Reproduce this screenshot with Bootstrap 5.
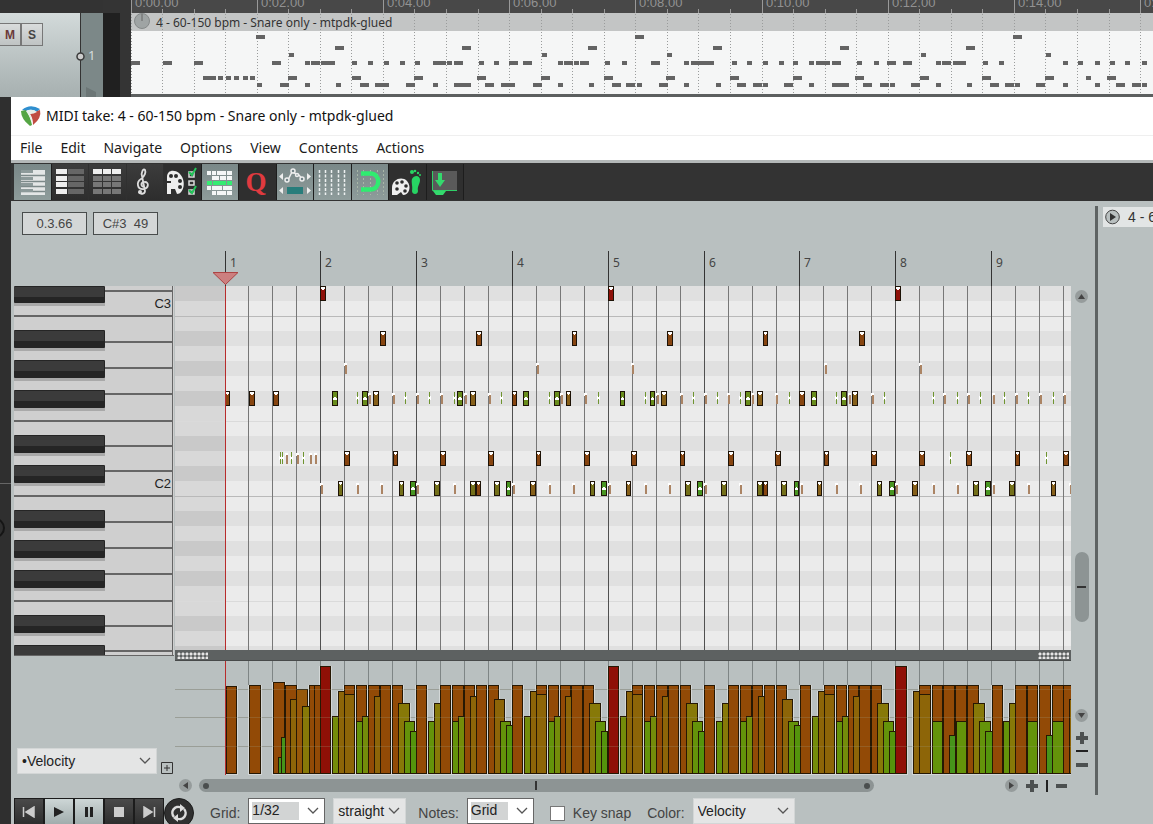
<!DOCTYPE html>
<html lang="en">
<head>
<meta charset="utf-8">
<meta name="viewport" content="width=device-width, initial-scale=1">
<title>MIDI take: 4 - 60-150 bpm - Snare only - mtpdk-glued</title>
<link href="https://cdn.jsdelivr.net/npm/bootstrap@5.3.0/dist/css/bootstrap.min.css" rel="stylesheet">
<style>
body{background:#333;font-family:"Noto Sans","Open Sans",sans-serif;font-size:14px;line-height:20px;color:#111;overflow:hidden}
svg{display:block}
.arrange{height:97px}
.trackhead{width:81px;margin-top:13px;background:linear-gradient(#d3dada,#b3bcbc 70%,#a7b0b0);border-right:1px solid #333}
.ms-btn{width:22px;height:23px;margin-top:10px;background:linear-gradient(#d9dcdc,#bfc3c3);border:1px solid #777;font:bold 12px/20px "Liberation Sans",sans-serif;color:#444;padding:0}
.ms-btn.mute{color:#6b3a3a;border-left:0;width:21px}
.tracknum{width:22px;margin-top:13px;background:#7c8888;color:#d7dcdc}
.tracknum span{font-size:13px;margin-left:7px}
.trackgap{width:28px;background:#343434}
.trackgap div{width:17px;margin-top:13px;background:#202020}
.side{width:11px;background:#2f2f2f}
.titlebar{height:39px;background:#fff;border-bottom:1px solid #efefef;font-size:14px;padding-left:9px}
.menubar{height:27px;background:#fff;border-bottom:3px solid #b4b8b8;padding-left:9px}
.menubar a{color:#1b1b1b;text-decoration:none;margin-right:18px;font-size:14px;line-height:24px}
.tools{background:#333;height:38px;padding:1px 0 1px 3px}
.toolset{width:450px}
.toolset button{padding:0;border:0;border-right:1px solid #1d1d1d;background:#2f2f2f;height:36px}
.toolset button.grp{background:linear-gradient(#3c3c3c,#2d2d2d);border-right-color:#303030}
.toolset button.on{background:linear-gradient(#7a8888,#8e9c9b)}
.editor{background:#b9c0c0}
.leftcol{width:164px;padding-left:3px}
.infobar{height:85px;padding:11px 0 0 8px;gap:6px}
.info{height:23px;width:65px;border:1px solid #484c4c;background:#d4d7d7;color:#444;font:13px/21px "Liberation Sans",sans-serif;text-align:center;white-space:pre}
.lanecell{height:120px;padding:0 2px 2px 3px}
.form-select{border-radius:0;border:1px solid #d3d6d6;background-color:#e4e5e5;color:#222;font:14px/20px "Liberation Sans",sans-serif;height:26px;padding:0 18px 0 4px;--bs-form-select-bg-img:url("data:image/svg+xml,%3csvg xmlns='http://www.w3.org/2000/svg' viewBox='0 0 12 12'%3e%3cpath fill='none' stroke='%23555' stroke-width='1.3' d='m1 3 5 5 5-5'/%3e%3c/svg%3e");background-position:right 5px center;background-size:12px}
.form-select.edit{background-color:#fff;border-color:#666;background-image:var(--bs-form-select-bg-img),linear-gradient(#d2d4d4,#d2d4d4);background-repeat:no-repeat;background-position:right 5px center,3px 3px;background-size:12px,calc(100% - 28px) 18px;line-height:18px;padding-bottom:3px;padding-left:3px}
.splitter{height:11px;background:#5d6161;border-bottom:1px solid #474a4a;padding:2px 2px 0}
.grip{width:31px;height:7px;background:radial-gradient(circle,#e6e6e6 1px,transparent 2px) 0 0/4px 4px}
.hbar{height:21px;padding:0 0 0 4px}
.round{width:13px;height:13px;border-radius:50%;background:#969c9c;border:0;padding:0;display:flex;align-items:center;justify-content:center}
.hthumb{width:83%;height:13px;border-radius:7px;background:#8d9494;margin-left:7px;padding:0 4px}
.dotgrip{width:6px;height:6px;border-radius:50%;background:#4a4e4e}
.vcol{width:24px;padding:5px 7px 4px 4px}
.vthumb{width:14px;height:70px;border-radius:7px;background:#8d9494}
.zoombtn{border:0;padding:0;background:none}
.vdiv{width:3px;margin:5px 0 1px;background:#5e6363}
.takes{width:55px;padding:6px 0 0 5px}
.takes div{height:20px;padding-left:2px;background:#e2e5e5;font:14px/20px "Liberation Sans",sans-serif;white-space:nowrap;color:#333}
.transport{height:31px;padding:2px 0 0 3px;background:#b9c0c0;font:14px/20px "Liberation Sans",sans-serif;color:#444}
.transport label{padding-top:5px}
.transport button{width:30px;height:28px;border:1px solid #1c1c1c;padding:0;background:linear-gradient(#4a4a4a,#2c2c2c);display:flex;align-items:center;justify-content:center}
.transport button.on{background:linear-gradient(#cdd6d6,#9fabab)}
.transport button.loop{width:30px;height:30px;border-radius:50%;background:#303030}
.transport .form-check-input{border-radius:0;width:15px;height:15px;border:1px solid #777;background:#fff}
.w-grid{width:77px}.w-type{width:73px}.w-notes{width:67px}.w-color{width:102px}
</style>
</head>
<body>
<div class="vh-100 d-flex flex-column overflow-hidden">

<section class="arrange d-flex flex-shrink-0">
  <div class="trackhead d-flex flex-shrink-0">
    <button class="ms-btn mute">M</button><button class="ms-btn">S</button>
  </div>
  <div class="tracknum position-relative d-flex align-items-center flex-shrink-0"><span>1</span>
    <svg class="position-absolute top-0 start-0" width="22" height="84" overflow="visible"><circle cx="-.5" cy="43.500" r="3.500" fill="#ccc" stroke="#3a3a3a" stroke-width="1.500"/><path d="M5 74l10 5v5H5z" fill="#6c7676"/></svg>
  </div>
  <div class="trackgap d-flex flex-shrink-0"><div></div></div>
  <svg id="arrange" class="flex-fill" width="100" height="97"></svg>
</section>

<div class="d-flex flex-fill">
  <div class="side flex-shrink-0"><svg width="11" height="450"><path d="M0 386.500h11" stroke="#666"/><circle cx="-5" cy="431" r="9" fill="none" stroke="#151515" stroke-width="2"/></svg></div>
  <main class="flex-fill overflow-hidden">
    <div class="titlebar d-flex align-items-center gap-1">
      <svg width="22" height="22" viewBox="0 0 22 22"><path d="M2 5Q10-2 20 4L17 7Q11 3 6 6z" fill="#2f8fcf"/><path d="M1 6L6 5Q10 11 12 20L10 21Q1 14 1 6z" fill="#55a544"/><path d="M20 5Q22 13 13 20Q13 13 10 9z" fill="#c04c42"/><path d="M6 6Q13 3 17 7Q14 9 10 9Q12 13 12 17Q9 10 6 6z" fill="#e8eee8"/></svg>
      <span>MIDI take: 4 - 60-150 bpm - Snare only - mtpdk-glued</span>
    </div>
    <nav class="menubar d-flex">
      <a href="#">File</a><a href="#">Edit</a><a href="#">Navigate</a><a href="#">Options</a><a href="#">View</a><a href="#">Contents</a><a href="#">Actions</a>
    </nav>
    <div class="tools">
      <div class="toolset d-flex">
        <button class="flex-fill on" aria-label="Piano roll"><svg width="36" height="36"><rect x="7" y="6" width="24" height="25" fill="#e3e6e6"/><path d="M7 11.500h24M7 17.500h24M7 22.500h24M7 27.500h24" stroke="#7c8989" stroke-width="1.500"/><path d="M7 6h12v3H7zM7 13h12v3H7zM7 19h12v3H7zM7 25h12v3H7z" fill="#8d9a9a"/></svg></button>
        <button class="flex-fill grp" aria-label="Named notes"><svg width="36" height="36"><path d="M4 5h11v5H4zM4 12h11v5H4zM4 18h11v5H4zM4 25h11v5H4z" fill="#eee"/><path d="M16 5h16v5H16zM16 12h16v5H16zM16 18h16v5H16zM16 25h16v5H16z" fill="#666"/></svg></button>
        <button class="flex-fill grp" aria-label="Event list"><svg width="36" height="36"><path d="M4 5h9v5H4zM14 5h8v5h-8zM23 5h9v5h-9z" fill="#eee"/><path d="M4 12h9v5H4zM14 12h8v5h-8zM23 12h9v5h-9zM4 18h9v5H4zM14 18h8v5h-8zM23 18h9v5h-9zM4 25h9v5H4zM14 25h8v5h-8zM23 25h9v5h-9z" fill="#777"/></svg></button>
        <button class="flex-fill grp" aria-label="Notation"><svg width="36" height="36"><g fill="none" stroke="#ddd" stroke-width="1.800"><path d="M17 23c-4-1-3-6 1-5 4 0 4 6-1 7-7 1-8-7-3-10 4-3 5-7 4-9-2-2-4 3-3 6l3 15c0 3-5 4-6 1"/></g><circle cx="13" cy="28" r="2" fill="#ddd"/></svg></button>
        <button class="flex-fill" aria-label="Color by"><svg width="36" height="36"><path d="M3 30V13C3 6 10 5 15 9c8 7 5 21-2 21l-2-5h-4v5z" fill="#eee"/><g fill="#2c2c2c"><circle cx="7" cy="12" r="2"/><circle cx="12" cy="12" r="2"/><circle cx="16" cy="17" r="2"/><circle cx="16" cy="23" r="2"/><path d="M3 17h4v2H3z"/></g><g fill="none" stroke="#ddd" stroke-width="1.500"><path d="M25 8h5v5h-5zM25 17h5v4h-5zM25 26h5v4h-5z"/></g><path d="M25 8l3 3 4-7M25 26l3 3 4-7" fill="none" stroke="#24c55b" stroke-width="2"/></svg></button>
        <button class="flex-fill on" aria-label="Show rows"><svg width="36" height="36"><path d="M5 7h4v4H5zM10 7h4v4h-4zM15 7h9v4h-9zM25 7h5v4h-5zM10 12h7v4h-7zM18 12h6v4h-6zM25 12h5v4h-5zM5 22h4v4H5zM10 22h10v4H10zM21 22h9v4h-9zM10 27h4v4h-4zM15 27h9v4h-9zM25 27h5v4h-5z" fill="#f4f6f6"/><path d="M5 17h5v4H5zM11 17h13v4H11zM25 17h5v4h-5z" fill="#35ec72"/></svg></button>
        <button class="flex-fill" aria-label="Quantize"><svg width="36" height="36"><text x="17" y="27" text-anchor="middle" font-family="Liberation Serif,serif" font-weight="bold" font-size="27" fill="#e03a3f">Q</text></svg></button>
        <button class="flex-fill on" aria-label="Move CC with notes"><svg width="36" height="36"><path d="M11 16l4-8 7 3 4 5" fill="none" stroke="#eee" stroke-width="1.500"/><g fill="#75868a" stroke="#eee" stroke-width="1.500"><circle cx="10" cy="16" r="2"/><circle cx="16" cy="7" r="2"/><circle cx="20" cy="11" r="1.500"/><circle cx="25" cy="15" r="2"/></g><path d="M6 9v7l-4-3.500zM30 9v7l4-3.500zM6 23v7l-4-3.500zM30 23v7l4-3.500z" fill="#eee"/><path d="M10 23h16v7H10z" fill="#287d7b"/></svg></button>
        <button class="flex-fill on" aria-label="Grid lines"><svg width="36" height="36"><path d="M5.500 6v25M11.500 6v25M17.500 6v25M24.500 6v25M30.500 6v25" stroke="#eef1f1" stroke-dasharray="3 1.500" stroke-width="1.500"/></svg></button>
        <button class="flex-fill on" aria-label="Snap to grid"><svg width="36" height="36"><path d="M5.500 6v25M11.500 6v25M18.500 6v25M25.500 6v25M31.500 6v25" stroke="#a8b7a8" stroke-dasharray="2 2"/><path d="M9 9.500h9c11 0 11 16 0 16H9" fill="none" stroke="#2fec70" stroke-width="4.500"/></svg></button>
        <button class="flex-fill" aria-label="Step input colors"><svg width="36" height="36"><path d="M3 31V24c0-9 10-12 15-7 5 6 2 14-4 14l-2-3-4 3z" fill="#eee"/><g fill="#2c2c2c"><circle cx="8" cy="19" r="1.800"/><circle cx="13" cy="18" r="1.800"/><circle cx="17" cy="22" r="1.800"/><circle cx="8" cy="25" r="1.800"/><circle cx="16" cy="27" r="1.800"/></g><path d="M23 15c2-4 8-4 8 1 0 4-3 6-2 11 0 4-6 4-6 0 1-4-1-9 0-12z" fill="#27d463"/><g fill="#27d463"><circle cx="23" cy="8" r="2"/><circle cx="26" cy="7" r="1.300"/><circle cx="29" cy="9" r="1.200"/><circle cx="31" cy="11" r="1"/></g></svg></button>
        <button class="flex-fill" aria-label="Dock"><svg width="36" height="36"><path d="M6 7h24v19H6z" fill="#5a5a5a"/><path d="M5.500 7v19.500H30" fill="none" stroke="#2fd067"/><path d="M11 9h4v7h3l-5 7-5-7h3z" fill="#34d96d"/><path d="M6 27h13l-3 4h-7z" fill="#34d96d"/></svg></button>
      </div>
    </div>

    <div class="editor d-flex">
      <div class="leftcol flex-shrink-0">
        <div class="infobar d-flex"><div class="info">0.3.66</div><div class="info">C#3  49</div></div>
        <svg id="keys" width="161" height="370"></svg>
        <div class="lanecell d-flex align-items-end gap-1">
          <select class="form-select" aria-label="Lane"><option>•Velocity</option></select>
          <button class="zoombtn" aria-label="Add lane"><svg width="12" height="12"><path d="M.5.500h11v11H.5zM3 6h6M6 3v6" fill="none" stroke="#333"/></svg></button>
        </div>
      </div>
      <div class="flex-fill overflow-hidden">
        <svg id="ruler" width="100%" height="85"></svg>
        <svg id="roll" width="100%" height="364"></svg>
        <div class="splitter d-flex justify-content-between"><div class="grip"></div><div class="grip"></div></div>
        <svg id="lane" width="100%" height="114"></svg>
        <div class="hbar d-flex align-items-center">
          <button class="round" aria-label="Scroll left"><svg width="7" height="7"><path d="M6 0v7L1 3.500z" fill="#444"/></svg></button>
          <div class="flex-fill"><div class="hthumb d-flex justify-content-between align-items-center"><i class="dotgrip"></i><svg width="2" height="9"><path d="M1 0v9" stroke="#333" stroke-width="2"/></svg><i class="dotgrip"></i></div></div>
          <button class="round" aria-label="Scroll right"><svg width="7" height="7"><path d="M1 0v7l5-3.500z" fill="#444"/></svg></button>
          <button class="zoombtn ms-2" aria-label="Zoom in"><svg width="12" height="12"><path d="M0 6h12M6 0v12" stroke="#4c5050" stroke-width="4"/></svg></button>
          <svg class="ms-2" width="2" height="12"><path d="M1 0v12" stroke="#222" stroke-width="2"/></svg>
          <button class="zoombtn ms-2 me-1" aria-label="Zoom out"><svg width="11" height="12"><path d="M0 6h11" stroke="#4c5050" stroke-width="4"/></svg></button>
        </div>
      </div>
      <div class="vcol d-flex flex-column align-items-center flex-shrink-0">
        <svg height="84" width="1"></svg>
        <button class="round flex-shrink-0" aria-label="Scroll up"><svg width="7" height="7"><path d="M0 6h7L3.500 1z" fill="#444"/></svg></button>
        <div class="flex-fill d-flex flex-column"><div style="flex:250"></div><div class="vthumb d-flex align-items-center justify-content-center"><svg width="9" height="2"><path d="M0 1h9" stroke="#333" stroke-width="2"/></svg></div><div style="flex:87"></div></div>
        <button class="round flex-shrink-0" aria-label="Scroll down"><svg width="7" height="7"><path d="M0 1h7L3.500 6z" fill="#444"/></svg></button>
        <button class="zoombtn mt-2" aria-label="Zoom in vertically"><svg width="12" height="14"><path d="M0 8h12M6 2v12" stroke="#4c5050" stroke-width="4"/></svg></button>
        <svg class="mt-1" width="12" height="6"><path d="M0 3h12" stroke="#222" stroke-width="2"/></svg>
        <button class="zoombtn mt-2 mb-4" aria-label="Zoom out vertically"><svg width="12" height="6"><path d="M0 3h12" stroke="#4c5050" stroke-width="4"/></svg></button>
      </div>
      <div class="vdiv flex-shrink-0"></div>
      <aside class="takes flex-shrink-0 overflow-hidden"><div class="d-flex align-items-center gap-2"><svg class="flex-shrink-0" width="15" height="16"><circle cx="7.500" cy="8" r="6.800" fill="#b9c0c0" stroke="#444"/><path d="M5 4v8l6-4z" fill="#333"/></svg><span>4 - 60-150 bpm</span></div></aside>
    </div>

    <div class="transport d-flex align-items-start">
      <button aria-label="Start"><svg width="14" height="12"><path d="M1.500 1v10M12 1v10L4 6z" stroke="#ccc" stroke-width="1.500" fill="#ccc"/></svg></button>
      <button class="on" aria-label="Play"><svg width="12" height="12"><path d="M1 1v10l10-5z" fill="#222"/></svg></button>
      <button class="on" aria-label="Pause"><svg width="10" height="12"><path d="M1 1h3v10H1zM6 1h3v10H6z" fill="#222"/></svg></button>
      <button aria-label="Stop"><svg width="10" height="10"><path d="M0 0h10v10H0z" fill="#ccc"/></svg></button>
      <button aria-label="End"><svg width="14" height="12"><path d="M12.500 1v10M2 1v10l8-5z" stroke="#ccc" stroke-width="1.500" fill="#ccc"/></svg></button>
      <button class="loop" aria-label="Repeat"><svg width="18" height="18"><path d="M4 13A6 6 0 0 1 11 3.500M14 5a6 6 0 0 1-7 9.500" fill="none" stroke="#ddd" stroke-width="2.500"/><path d="M10 0l5 4-5 4zM8 18l-5-4 5-4z" fill="#ddd"/></svg></button>
      <label for="g" class="ms-3">Grid:</label><select id="g" class="form-select edit w-grid ms-2"><option>1/32</option></select>
      <select class="form-select w-type ms-2" aria-label="Grid type"><option>straight</option></select>
      <label for="n" class="ms-2 ps-1">Notes:</label><select id="n" class="form-select edit w-notes ms-2"><option>Grid</option></select>
      <input id="k" type="checkbox" class="form-check-input ms-3 mt-2"><label for="k" class="ms-2">Key snap</label>
      <label for="c" class="ms-3">Color:</label><select id="c" class="form-select w-color ms-2"><option>Velocity</option></select>
    </div>
  </main>
</div>
</div>

<script src="https://cdn.jsdelivr.net/npm/bootstrap@5.3.0/dist/js/bootstrap.bundle.min.js"></script>
<script>
const BAR = 95.83, BEAT = BAR / 4, ORIGIN = 225;
const rect = (x, y, w, h, f, extra = '') => `<rect x="${x}" y="${y}" width="${w}" height="${h}" fill="${f}" ${extra}/>`;
const put = (id, dx, dy, s) => document.getElementById(id).innerHTML = `<g transform="translate(${dx} ${dy})">${s}</g>`;
const rollEnd = 175 + document.getElementById('roll').clientWidth;
const bars2draw = Math.ceil((rollEnd - ORIGIN - 10) / BAR);

// Notes per pitch row: letter = colour, number = start, * = narrow note.
const COL = {r:'#8e1008', b:'#874510', o:'#87601a', y:'#74701a', g:'#688c1c', e:'#489522'};
const rows = [
  {y:286, c:36,  notes:'r320 r608 r895'},
  {y:331, c:47,  notes:'b380 b476 b572* b667 b763* b859'},
  {y:361, c:54,  bt:'345 537 632 825 920'},
  {y:391, c:62,  notes:'b225* b249 b273 g332 g362 o373 g457 o470 b512* g523 g554 o566* g620* g650* o661 g745 o757 b799 g811 g841 o852',
    bt:'369 393 417 441 465 489 561 585 657 681 705 728 752 776 849 872 944 968 993 1016 1040 1064',
    gt:'357 405 429 454 501 549 598 645 693 717 740 789 836 884 933 957 980 1004 1028 1053'},
  {y:451, c:77,  notes:'b344 b393* b440 b488 b536* b584 b631 b680* b728 b775 b824* b871 b919 b966 b1015* b1063',
    bt:'286 297 310 315', gt:'280 282 291 303 950 1046'},
  {y:481, c:84, notes:'y338* y399* e410 y434 y470 b476* y494 e506* o530 y590* e601 o626* y685 e697 y721 y757 b763* y781 e794* o817* y877* e889 o912 y973 e985 y1009 o1051*',
    bt:'321 357 381 417 454 513 549 573 609 645 669 705 740 801 836 860 896 933 957 993 1028 1070'}
];
const nums = s => (s || '').split(' ').filter(Boolean);

// Piano roll
let s = rect(175, 286, 4000, 400, '#ebebeb');
for (const y of [286,331,361,391,436,466,511,541,571,616,646]) s += rect(175, y, 4000, 15, '#e0e0e0');
s += rect(175, 286, 50, 400, '#d8d8d8');
for (const y of [286,331,361,391,436,466,511,541,571,616,646]) s += rect(175, y, 50, 15, '#c9c9c9');
s += rect(175,316,4000,1,'#b9b9b9') + rect(175,421,4000,1,'#dadada') + rect(175,496,4000,1,'#b9b9b9') + rect(175,601,4000,1,'#dadada');
for (let i = 1; i < 150; i++) s += rect(Math.floor(ORIGIN + i*BEAT), 286, 1, 400, i % 4 ? '#777' : '#505050');
for (const r of rows) {
  for (const x of nums(r.bt)) s += rect(+x-1, r.y+2, 3, 3, '#fff') + rect(+x, r.y+4, 2, 9, '#ab8464');
  for (const x of nums(r.gt)) s += rect(+x-1, r.y+5, 3, 4, '#fff') + rect(+x, r.y+1, 1, 5, '#6f9430') + rect(+x, r.y+8, 1, 5, '#6f9430');
  for (const n of nums(r.notes)) {
    const w = n.endsWith('*') ? 5 : 6, x = parseInt(n.slice(1)), mid = 'ge'.includes(n[0]);
    s += rect(x+.5, r.y+.5, w-1, 14, COL[n[0]], 'stroke="#1d1206"')
      + (mid ? rect(x+1, r.y+7, w-2, 2, '#fff') + rect(x+2, r.y+6, w-4, 2, '#fff')
             : rect(x+1, r.y+1, w-2, 2, '#fff') + rect(x+2, r.y+3, w-4, 1, '#fff'));
  }
}
s += rect(225, 286, 1, 400, '#b82c2c');
put('roll', -175, -286, s);

// Measure ruler
s = '';
for (let i = 0; i < bars2draw; i++) {
  const x = Math.floor(ORIGIN + i*BAR);
  s += rect(x, 251, 1, 36, '#333') + `<text x="${x+5}" y="267" font-size="12" fill="#444">${i+1}</text>`;
}
s += '<path d="M213 272.500h25l-12.500 12z" fill="#cc7f7f" stroke="#ad4444"/>';
put('ruler', -175, -201, s);

// Keyboard
s = rect(14, 286, 160, 370, '#cfcfcf');
for (const y of [291,316,342,368,394,421,446,471,496,522,548,574,601,626,651]) s += rect(14, y-1, 159, 2, '#666');
for (const y of [286,330,360,390,435,465,510,540,570,615,645]) {
  const h = y == 286 ? 17 : 18;
  s += rect(14, y+3, 91, h, '#a9a9a9') + rect(14, y, 91, h, '#252525', 'rx="1"') + rect(14, y+1, 90, 10, '#3b3b3b');
}
s += rect(172, 286, 1, 370, '#666') + rect(14, 655, 160, 1, '#666');
for (const [t, y] of [['C3', 308], ['C2', 488]]) s += `<text x="171" y="${y}" text-anchor="end" font-size="13" font-family="Liberation Sans,sans-serif" fill="#222">${t}</text>`;
put('keys', -14, -286, s);

// Velocity lane: [start, width, top]; the groove repeats every three bars.
const groove = [[0,10,666],[12,7,716],[18,7,691],[24,10,685],[24,10,694],[36,10,685],[36,6,721],[42,6,716],[48,11,685],[54,6,696],[60,10,685],[72,10,685],[78,11,703],[84,10,721],[90,6,731],[96,10,685],[108,6,721],[114,6,703],[120,10,685],[132,11,685],[132,6,721],[138,6,716],[144,10,685],[150,6,696],[156,10,685],[168,10,685],[174,10,699],[180,10,721],[186,6,725],[192,10,685],[204,6,716],[210,6,691],[216,10,685],[216,10,694],[228,10,685],[228,6,721],[234,6,716],[240,10,685],[245,6,696],[251,11,685],[263,10,685],[269,11,703],[275,10,721],[281,6,731]];
let bars = [[226,10,686],[249,11,685],[273,11,682],[278,3,757],[281,4,737],[285,11,685],[290,6,699],[296,11,689],[302,7,706],[309,11,685],[314,6,685]];
for (const o of [320, 608]) bars.push(...groove.map(([x,w,t]) => [x+o, w, t]));
bars.push([895,11,666],[913,6,691],[919,11,685],[919,11,694],[932,10,685],[932,10,721],[943,11,685],[949,6,735],[955,11,685],[956,10,721],[967,11,685],[973,11,703],[979,11,721],[985,7,731],[992,10,685],[1003,6,721],[1009,7,703],[1015,11,685],[1027,10,685],[1027,10,721],[1039,11,685],[1046,6,735],[1052,11,685],[1052,11,721],[1063,10,685],[1069,6,699]);
const vcol = t => t < 670 ? '#8f1006' : t < 688 ? '#924a06' : t < 690 ? '#96580a' : t < 700 ? '#8d6508' : t < 710 ? '#877908' : t < 718 ? '#748c0a' : t < 723 ? '#64930a' : t < 733 ? '#54940c' : '#46941a';
s = '';
for (let i = 0; i < 150; i++) s += rect(Math.floor(ORIGIN + i*BEAT), 661, 1, 114, '#7e8585');
for (const y of [689,717,746]) s += rect(175, y, 4000, 1, '#999f9f');
for (const [x,w,t] of bars) s += rect(x-1, t, w+3, 775-t, '#d3d7d7');
for (const [x,w,t] of bars) s += rect(x+.5, t+.5, w, 774-t-1, vcol(t), 'stroke="#261803"');
for (const y of [689,717,746]) s += rect(175, y, 4000, 1, '#a09a80', 'opacity=".25"');
s += rect(225, 660, 1, 115, '#b82c2c');
put('lane', -175, -661, s);

// Arrange strip, drawn from the same notes at timeline scale
const K = 1.317, ax = x => Math.round(131 + (x - 225)*K);
s = rect(131,0,4000,13,'#484848') + rect(131,13,4000,18,'#c3c5c5') + rect(131,31,4000,64,'#f5f6f6') + rect(131,94,4000,3,'#5c5f5f');
for (let i = 0; 131 + i*31.55 < window.innerWidth; i++) {
  const x = Math.floor(131 + i*31.55);
  s += rect(x, i % 4 ? 9 : 0, 1, i % 4 ? 4 : 13, '#999') + `<path d="M${x+.5} 14v80" stroke="#9a9c9c" stroke-dasharray="1 2"/>`;
  if (i % 4 == 0) s += `<text x="${x+4}" y="7" font-size="13" font-family="Liberation Sans,sans-serif" fill="#929292">0:${String(i/2).padStart(2,'0')}.00</text>`;
}
for (const r of rows) {
  for (const x of [...nums(r.bt), ...nums(r.gt)]) s += rect(ax(+x), r.c-1, 5, 4, '#646464');
  for (const n of nums(r.notes)) s += rect(ax(parseInt(n.slice(1))), r.c-1, 9, 4, '#646464');
}
s += rect(130, 0, 1, 97, '#a02828') + '<circle cx="142" cy="21" r="7.500" fill="#9fa4a4" stroke="#858989"/><path d="M142 14v7" stroke="#666"/>';
s += '<text x="156" y="27" font-size="12" fill="#333">4 - 60-150 bpm - Snare only - mtpdk-glued</text>';
put('arrange', -131, 0, s);
</script>
</body>
</html>
